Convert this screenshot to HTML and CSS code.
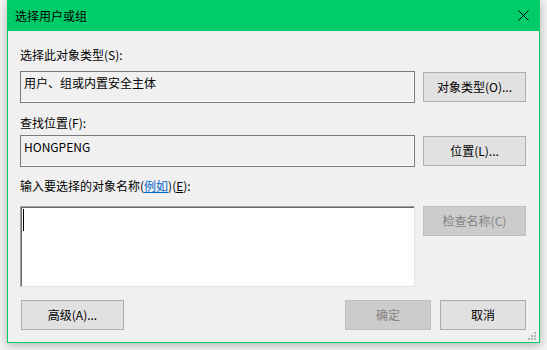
FILE: index.html
```html
<!DOCTYPE html>
<html lang="zh-CN">
<head>
<meta charset="utf-8">
<title>选择用户或组</title>
<link rel="stylesheet" href="styles.css">
</head>
<body>
<div class="window">
  <div class="titlebar">
    <span class="title">选择用户或组</span>
    <span class="close">
      <svg width="11" height="11" viewBox="0 0 11 11"><path d="M0.5 0.5 L10.5 10.5 M10.5 0.5 L0.5 10.5" stroke="#000" stroke-width="1" fill="none"/></svg>
    </span>
  </div>
  <div class="content">
    <div class="label label-1">选择此对象类型(S):</div>
    <div class="row row-1">
      <div class="field">用户、组或内置安全主体</div>
      <button class="btn wide">对象类型(O)...</button>
    </div>
    <div class="label label-2">查找位置(F):</div>
    <div class="row row-2">
      <div class="field">HONGPENG</div>
      <button class="btn wide">位置(L)...</button>
    </div>
    <div class="label label-3">输入要选择的对象名称(<a class="link" href="#">例如</a>)(<span class="ul">E</span>):</div>
    <div class="row row-3">
      <div class="names"><span class="caret"></span></div>
      <button class="btn wide disabled">检查名称(C)</button>
    </div>
    <div class="footer">
      <button class="btn wide">高级(A)...</button>
      <div class="spacer"></div>
      <button class="btn narrow disabled">确定</button>
      <button class="btn narrow">取消</button>
    </div>
  </div>
  <svg class="grip" width="9" height="8" viewBox="0 0 9 8">
    <rect x="6" y="0" width="2" height="2" fill="#b4b4b4"/>
    <rect x="3" y="3" width="2" height="2" fill="#b4b4b4"/>
    <rect x="6" y="3" width="2" height="2" fill="#b4b4b4"/>
    <rect x="0" y="6" width="2" height="2" fill="#b4b4b4"/>
    <rect x="3" y="6" width="2" height="2" fill="#b4b4b4"/>
    <rect x="6" y="6" width="2" height="2" fill="#b4b4b4"/>
  </svg>
</div>
</body>
</html>
```

FILE: styles.css
```css
* { box-sizing: border-box; }

html, body {
  margin: 0;
  padding: 0;
}

body {
  background: #f3f3f3;
  width: 547px;
  height: 350px;
  overflow: hidden;
  font-family: "Noto Sans CJK SC", "Noto Sans", sans-serif;
  font-size: 12px;
  color: #000;
}

.window {
  position: relative;
  margin-left: 7px;
  width: 533px;
  height: 343px;
  background: #f0f0f0;
  border: 1px solid #00cc6a;
  border-top: none;
  box-shadow: 0 2px 9px rgba(0, 0, 0, 0.28);
  display: flex;
  flex-direction: column;
}

.titlebar {
  height: 31px;
  margin: 0 -1px;
  background: #00cc6a;
  display: flex;
  align-items: center;
  padding-left: 8px;
  padding-right: 11px;
}

.title {
  flex: 1;
  font-size: 12px;
  line-height: 16px;
  padding-top: 1px;
}

.close {
  width: 11px;
  height: 11px;
  display: flex;
}

.content {
  flex: 1;
  padding: 16px 13px 0 12px;
  display: flex;
  flex-direction: column;
}

.label {
  line-height: 16px;
  height: 16px;
  white-space: nowrap;
}

.label-2 { margin-top: 12px; }
.label-3 { margin-top: 11px; }

.link {
  color: #0066cc;
  text-decoration: underline;
}

.ul { text-decoration: underline; }

.row {
  display: flex;
  align-items: center;
  gap: 8px;
}

.row-1 { margin-top: 8px; }
.row-2 { margin-top: 4px; }
.row-3 { margin-top: 12px; align-items: flex-start; }

.field {
  width: 395px;
  height: 32px;
  border: 1px solid #7a7a7a;
  box-shadow: inset -1px -1px 0 #ffffff;
  padding: 3px 0 0 3px;
  line-height: 16px;
  white-space: nowrap;
}

.names {
  width: 395px;
  height: 81px;
  background: #ffffff;
  border-top: 1px solid #a0a0a0;
  border-left: 1px solid #a0a0a0;
  border-right: 1px solid #e3e3e3;
  border-bottom: 1px solid #e3e3e3;
  box-shadow: inset 1px 1px 0 #696969;
  padding: 2px 0 0 2px;
}

.caret {
  display: block;
  width: 1px;
  height: 22px;
  background: #000;
}

.btn {
  font-family: inherit;
  font-size: 12px;
  color: #000;
  height: 30px;
  background: #e1e1e1;
  border: 1px solid #adadad;
  border-radius: 0;
  padding: 0;
  margin: 0;
  line-height: 16px;
}

.btn.wide { width: 103px; }
.btn.narrow { width: 86px; }

.btn.disabled {
  background: #cccccc;
  border-color: #bfbfbf;
  color: #838383;
}

.footer {
  margin-top: 13px;
  display: flex;
  gap: 9px;
}

.footer .btn.wide { margin-left: 1px; }

.spacer { flex: 1; }

.grip {
  position: absolute;
  right: 2px;
  bottom: 2px;
}
```
